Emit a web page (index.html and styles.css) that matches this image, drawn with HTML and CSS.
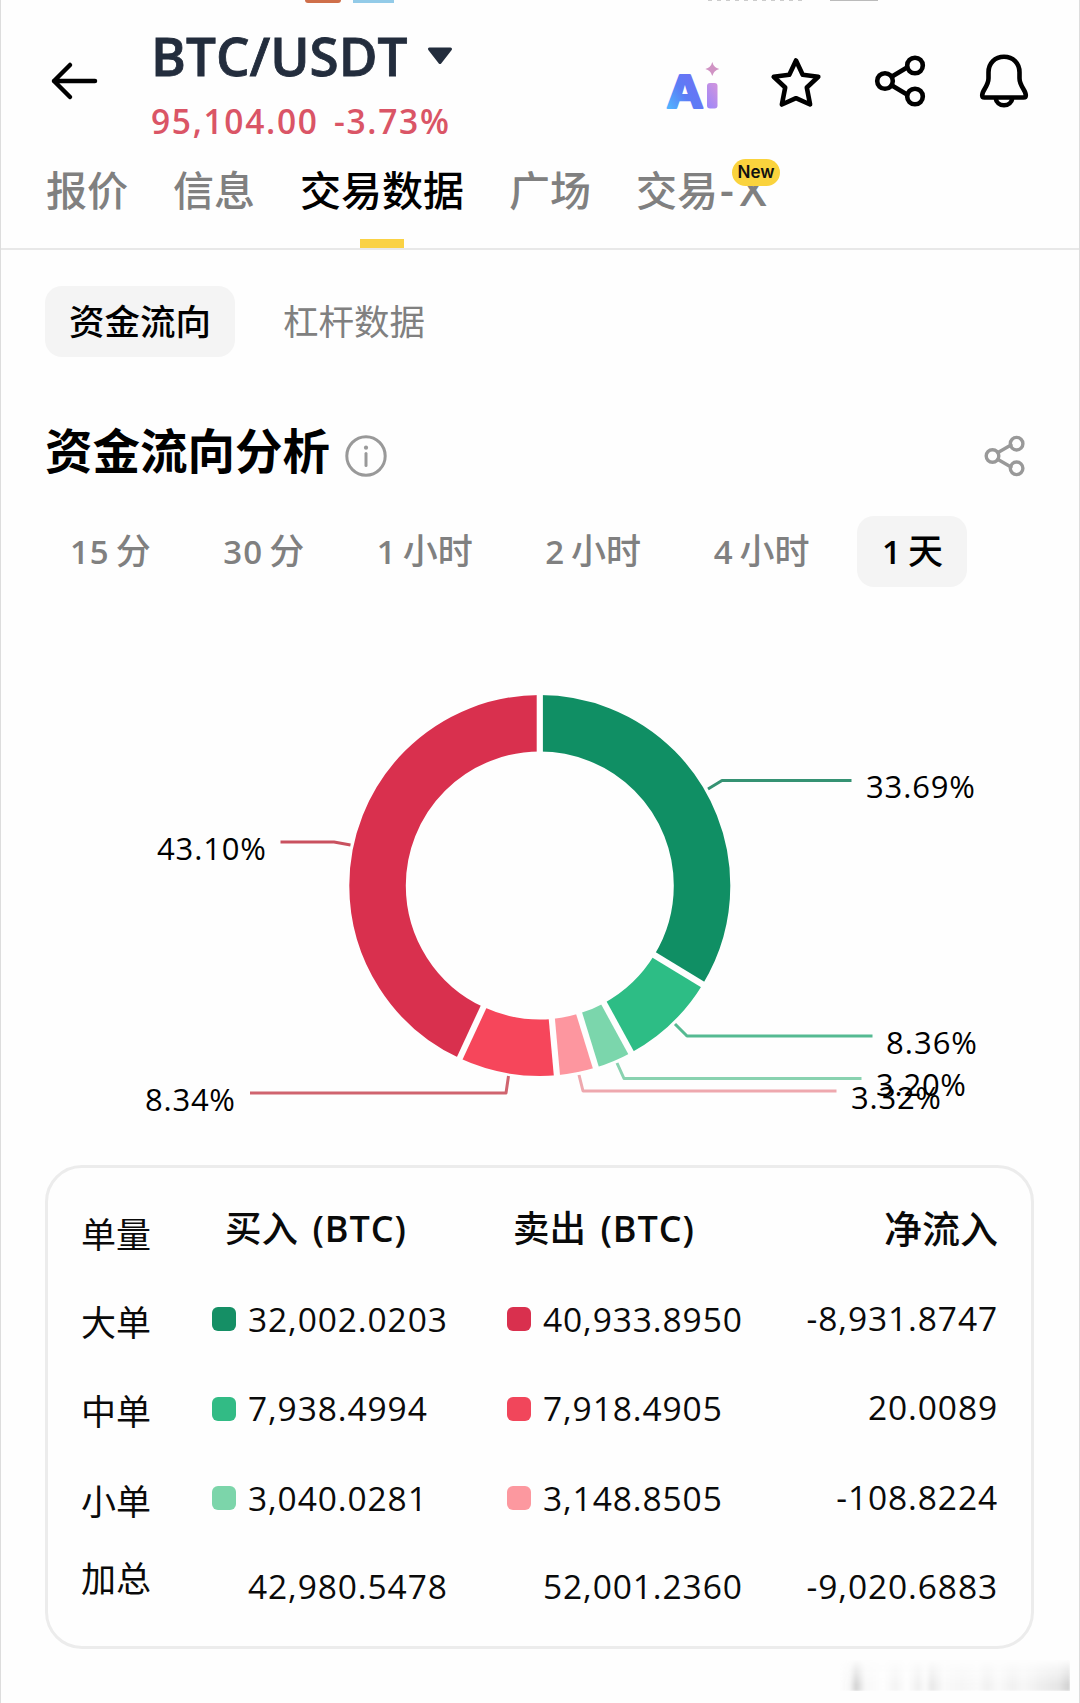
FILE: index.html
```html
<!DOCTYPE html>
<html lang="zh-CN">
<head>
    <meta charset="UTF-8">
    <title>BTC/USDT</title>
    <link rel="stylesheet" href="styles.css">
</head>
<body>
<div class="page">
    <div class="status">
        <span class="chip orange"></span>
        <span class="chip blue"></span>
        <span class="net"></span>
        <span class="battery"></span>
    </div>
    <div class="header">
        <svg class="back" width="48" height="40" viewBox="0 0 48 40"><path d="M44 20H3M19 4L3 20l16 16"/></svg>
        <div class="pair">
            <div class="name"><span>BTC/USDT</span><svg width="26" height="18" viewBox="0 0 26 18"><path d="M2.500 2h21L13 15.500z"/></svg></div>
            <div class="price"><span class="last">95,104.00</span><span class="change">-3.73%</span></div>
        </div>
        <div class="icons">
            <svg class="ai" width="56" height="54" viewBox="0 0 56 54">
                <defs>
                    <linearGradient id="aiA" x1="0" y1="1" x2="1" y2="0">
                        <stop offset="0.1" stop-color="#4fb8ff"/>
                        <stop offset="0.45" stop-color="#5b7df5"/>
                        <stop offset="1" stop-color="#7a68f5"/>
                    </linearGradient>
                    <linearGradient id="aiI" x1="0" y1="1" x2="0.6" y2="0">
                        <stop offset="0" stop-color="#9a86fb"/>
                        <stop offset="1" stop-color="#cb93e0"/>
                    </linearGradient>
                </defs>
                <text x="1.500" y="45.500" textLength="37" lengthAdjust="spacingAndGlyphs" fill="url(#aiA)" stroke="url(#aiA)">A</text>
                <rect x="42" y="21" width="10.500" height="25.500" rx="3" fill="url(#aiI)"/>
                <path d="M47.300 0q1.400 5.600 7 7q-5.600 1.400-7 7q-1.400-5.600-7-7q5.600-1.400 7-7z" fill="#d093c4"/>
            </svg>
            <svg class="star" width="50" height="52" viewBox="0 0 50 52"><path d="M25 3.500l6.700 14.200 15.600 2-11.500 10.800 3.300 17L25 41.200l-14.100 6.300 3.300-17L2.700 19.700l15.600-2z"/></svg>
            <svg class="share" width="50" height="52" viewBox="0 0 50 52"><path d="M17 21.500l15-9M17 30.500l15 9"/><circle cx="10" cy="26" r="7.800"/><circle cx="40" cy="10.500" r="7.800"/><circle cx="40" cy="41.500" r="7.800"/></svg>
            <svg class="bell" width="50" height="56" viewBox="0 0 50 56"><path d="M25 3.800c-9 0-15.500 6.500-15.500 15.500v6c0 8-6.300 11.500-6.300 17 0 1.400.9 2.200 2.200 2.200h39.200c1.300 0 2.200-.8 2.200-2.200 0-5.500-6.300-9-6.300-17v-6C40.500 10.300 34 3.800 25 3.800zM16.500 45a8.600 8.600 0 0 0 17 0"/></svg>
        </div>
    </div>
    <div class="tabs">
        <a>报价</a>
        <a>信息</a>
        <a class="current">交易数据</a>
        <a>广场</a>
        <a>交易<b>-X</b><span class="new">New</span></a>
    </div>
    <div class="subtabs">
        <a class="current">资金流向</a>
        <a>杠杆数据</a>
    </div>
    <div class="title">
        <h2>资金流向分析</h2>
        <svg class="info" width="42" height="42" viewBox="0 0 42 42"><circle cx="21" cy="21" r="19.200"/><path d="M21 18.500v12"/><circle class="dot" cx="21" cy="12.700" r="2.100"/></svg>
        <svg class="share" width="42" height="44" viewBox="0 0 42 44"><path d="M14 18.500l13-7.500M14 25.500l13 7.500"/><circle cx="8.500" cy="22" r="6.300"/><circle cx="32.600" cy="9.700" r="6.300"/><circle cx="32.600" cy="34.300" r="6.300"/></svg>
    </div>
    <div class="periods">
        <a><b>15</b> 分</a>
        <a><b>30</b> 分</a>
        <a><b>1</b> 小时</a>
        <a><b>2</b> 小时</a>
        <a><b>4</b> 小时</a>
        <a class="current"><b>1</b> 天</a>
    </div>
    <!-- 环形图 -->
    <svg class="chart" width="1080" height="480" viewBox="0 660 1080 480">
        <g class="ring" transform="translate(539.800 885.500) rotate(-90)">
            <circle r="162.250" pathLength="100" stroke="#108f64" stroke-dasharray="33.690 100"/>
            <circle r="162.250" pathLength="100" stroke="#2dbd85" stroke-dasharray="8.360 100" stroke-dashoffset="-33.690"/>
            <circle r="162.250" pathLength="100" stroke="#7bd6ac" stroke-dasharray="3.200 100" stroke-dashoffset="-42.050"/>
            <circle r="162.250" pathLength="100" stroke="#fd969f" stroke-dasharray="3.320 100" stroke-dashoffset="-45.250"/>
            <circle r="162.250" pathLength="100" stroke="#f6465b" stroke-dasharray="8.340 100" stroke-dashoffset="-48.570"/>
            <circle r="162.250" pathLength="100" stroke="#d9304e" stroke-dasharray="43.100 100" stroke-dashoffset="-56.910"/>
        </g>
        <g class="gaps" transform="translate(539.800 885.500)">
            <path d="M0-130V-194"/>
            <path d="M0-130V-194" transform="rotate(121.280)"/>
            <path d="M0-130V-194" transform="rotate(151.380)"/>
            <path d="M0-130V-194" transform="rotate(162.900)"/>
            <path d="M0-130V-194" transform="rotate(174.850)"/>
            <path d="M0-130V-194" transform="rotate(204.870)"/>
        </g>
        <g class="leads">
            <path stroke="#359273" d="M708 789L722 780.500H851.500"/>
            <path stroke="#55ba92" d="M675 1024L687 1036H872.500"/>
            <path stroke="#89d2b0" d="M617 1063L624 1078.500H861.500"/>
            <path stroke="#eea8ae" d="M579 1075L583 1091H836.500"/>
            <path stroke="#d0646f" d="M508.500 1076L506 1093H250"/>
            <path stroke="#c9515f" d="M350.500 845L334 842H280.500"/>
        </g>
        <g class="labels">
            <text x="866" y="798" textLength="109">33.69%</text>
            <text x="886" y="1054" textLength="91">8.36%</text>
            <text x="876" y="1096" textLength="90">3.20%</text>
            <text x="851" y="1109" textLength="90">3.32%</text>
            <text x="145" y="1110.500" textLength="90">8.34%</text>
            <text x="157" y="859.500" textLength="109">43.10%</text>
        </g>
    </svg>
    <div class="card">
        <div class="row head">
            <span class="label">单量</span>
            <span class="buy">买入 <b>(BTC)</b></span>
            <span class="sell">卖出 <b>(BTC)</b></span>
            <span class="flow">净流入</span>
        </div>
        <div class="row">
            <span class="label">大单</span>
            <span class="buy"><i class="b1"></i>32,002.0203</span>
            <span class="sell"><i class="s1"></i>40,933.8950</span>
            <span class="flow">-8,931.8747</span>
        </div>
        <div class="row">
            <span class="label">中单</span>
            <span class="buy"><i class="b2"></i>7,938.4994</span>
            <span class="sell"><i class="s2"></i>7,918.4905</span>
            <span class="flow">20.0089</span>
        </div>
        <div class="row">
            <span class="label">小单</span>
            <span class="buy"><i class="b3"></i>3,040.0281</span>
            <span class="sell"><i class="s3"></i>3,148.8505</span>
            <span class="flow">-108.8224</span>
        </div>
        <div class="row total">
            <span class="label">加总</span>
            <span class="buy"><i></i>42,980.5478</span>
            <span class="sell"><i></i>52,001.2360</span>
            <span class="flow">-9,020.6883</span>
        </div>
    </div>
    <div class="mark"></div>
</div>
</body>
</html>
```
FILE: styles.css
```css
* {
    padding: 0;
    margin: 0;
    box-sizing: border-box;
}
body {
    background: #fefefe;
    color: #0a0a0a;
    font-family: "Open Sans", "Noto Sans CJK SC", sans-serif;
}
.page {
    width: 1080px;
    height: 1703px;
    overflow: hidden;
    border-left: 1px solid #ddd;
    border-right: 1px solid #ddd;
}
svg {
    display: block;
    flex: none;
    fill: none;
    overflow: visible;
}
b {
    font-weight: 600;
}
/* 状态栏 */
.status {
    display: flex;
    height: 3px;
    padding-left: 304px;
}
.chip {
    width: 36px;
    height: 3px;
    background: #cf6f4a;
    border-radius: 0 0 10px 10px;
}
.chip.blue {
    width: 41px;
    margin-left: 12px;
    background: #93cbe8;
    border-radius: 0;
}
.net {
    width: 98px;
    height: 1px;
    margin-left: 314px;
    background: repeating-linear-gradient(90deg, #ccc 0 4px, #fefefe 4px 9px);
}
.battery {
    width: 48px;
    height: 1px;
    margin-left: 24px;
    background: #bbb;
}
/* 头部 */
.header {
    display: flex;
    height: 147px;
    padding-left: 50px;
}
.back {
    margin-top: 58px;
    stroke: #000;
    stroke-width: 4.5;
    stroke-linecap: round;
    stroke-linejoin: round;
}
.pair {
    width: 320px;
    margin-left: 52px;
    padding-top: 18px;
}
.name {
    display: flex;
    align-items: center;
    height: 70px;
    font-size: 53px;
    line-height: 70px;
    font-weight: 600;
    color: #232d3d;
}
.name span {
    width: 276px;
    -webkit-text-stroke: 0.800px #232d3d;
}
.name svg {
    fill: #232d3d;
    stroke: #232d3d;
    stroke-width: 3;
    stroke-linejoin: round;
}
.price {
    display: flex;
    height: 46px;
    margin-top: 7px;
    line-height: 46px;
    font-size: 33.500px;
    font-weight: 600;
    letter-spacing: 1.700px;
    color: #da5566;
}
.last {
    width: 183px;
}
.icons {
    display: flex;
    margin-left: 194px;
}
.icons .star, .icons .share, .icons .bell {
    stroke: #000;
    stroke-width: 4.6;
    stroke-linejoin: round;
    stroke-linecap: round;
}
.ai {
    margin-top: 59px;
}
.ai text {
    font-family: Inter, sans-serif;
    font-size: 45px;
    font-weight: 700;
    stroke-width: 2.200;
    stroke-linejoin: round;
}
.icons .star {
    margin: 54px 0 0 50px;
}
.icons .share {
    margin: 52px 0 0 54px;
}
.icons .bell {
    margin: 50px 0 0 54px;
}
/* 导航 */
.tabs {
    display: flex;
    gap: 45px;
    height: 100px;
    padding: 7px 0 0 45px;
    border-bottom: 2px solid #e8e8e8;
    font-size: 41px;
    line-height: 66px;
    color: #808080;
    font-weight: 500;
}
.tabs a {
    position: relative;
    white-space: nowrap;
}
.tabs b {
    margin-left: 2px;
    font-size: 43px;
    letter-spacing: 6px;
    line-height: 1;
}
.tabs .current {
    color: #000;
    font-weight: 500;
}
.tabs .current::after {
    content: "";
    position: absolute;
    left: 60px;
    bottom: 0;
    width: 44px;
    height: 9px;
    background: #fad244;
}
.new {
    position: absolute;
    left: 96px;
    top: 2px;
    width: 48px;
    height: 27px;
    border-radius: 14px;
    background: #fad33d;
    color: #111;
    font: 600 17px/27px Inter, sans-serif;
    text-align: center;
}
.subtabs {
    display: flex;
    gap: 24px;
    padding: 36px 0 0 44px;
    font-size: 35.500px;
    line-height: 71px;
    color: #808080;
}
.subtabs a, .periods a {
    height: 71px;
    padding: 0 24px;
    border-radius: 17px;
    white-space: nowrap;
}
.subtabs .current, .periods .current {
    background: #f4f4f4;
    color: #000;
    font-weight: 500;
}
.title {
    display: flex;
    height: 88px;
    margin-top: 50px;
    padding-left: 44px;
}
.title h2 {
    width: 300px;
    font-size: 47.500px;
    line-height: 88px;
    color: #000;
    font-weight: 700;
}
.title .info, .title .share {
    stroke: #999;
    stroke-width: 3;
    stroke-linecap: round;
}
.title .info {
    margin-top: 28px;
}
.info .dot {
    fill: #999;
    stroke: none;
}
.title .share {
    margin: 27px 0 0 597px;
    stroke-width: 3.400;
}
/* 时间 */
.periods {
    display: flex;
    gap: 22.500px;
    margin-top: 21px;
    padding-left: 44px;
    height: 71px;
    font-size: 35px;
    line-height: 70px;
    color: #808080;
    font-weight: 500;
}
.periods a {
    padding: 0 25px;
    word-spacing: -3px;
}
.periods b {
    font-size: 33px;
    letter-spacing: 1px;
}
.periods .current {
    padding: 0 24px 0 25px;
}
.chart {
    margin: 73px 0 0 -1px;
}
.ring {
    stroke-width: 56.500;
}
.gaps {
    stroke: #fefefe;
    stroke-width: 6.200;
}
.leads {
    stroke-width: 3;
    stroke-linejoin: round;
}
.labels {
    fill: #000;
    font-size: 31px;
}
/* 表格 */
.card {
    width: 989px;
    height: 484px;
    margin: 25px 0 0 44px;
    padding: 17px 33px 0 33px;
    border: 3px solid #ececec;
    border-radius: 37px;
}
.row {
    display: grid;
    grid-template-columns: 131px 295px 295px 1fr;
    height: 89.500px;
    line-height: 89.500px;
    font-size: 33.500px;
    letter-spacing: 0.900px;
    white-space: nowrap;
}
.label {
    padding-top: 3px;
    font-size: 35px;
    letter-spacing: 0;
}
.total .label {
    padding: 0;
    margin-top: -9px;
}
.buy, .sell {
    display: flex;
    align-items: center;
    margin-top: -3px;
}
.row i {
    width: 24px;
    height: 24px;
    margin-right: 12px;
    border-radius: 6px;
}
.head {
    font-size: 36.500px;
    font-weight: 500;
    letter-spacing: 0;
}
.head .label {
    padding-top: 5px;
    font-weight: 400;
}
.head .buy, .head .sell {
    display: block;
    margin-top: -1px;
}
.head b {
    margin-left: 5px;
    font-size: 36px;
    letter-spacing: 0.900px;
}
.head .buy {
    padding-left: 13px;
}
.head .sell {
    padding-left: 6px;
}
.flow {
    margin-top: -1px;
    text-align: right;
}
.head .flow {
    font-size: 38px;
}
.b1 { background: #158f65; }
.b2 { background: #32bb85; }
.b3 { background: #7cd5aa; }
.s1 { background: #d9304e; }
.s2 { background: #f1465b; }
.s3 { background: #fc989f; }
/* 右下角水印 */
.mark {
    width: 230px;
    height: 32px;
    margin: 10px 0 0 839px;
    background: linear-gradient(90deg, transparent 0, #f8f8f8 4%, #d4d4d4 7%, #f8f8f8 11%, #fefefe 19%, #f4f4f4 24%, #fefefe 29%, #f0f0f0 34%, #fbfbfb 37%, #e9e9e9 40%, #fafafa 45%, #f6f6f6 53%, #fafafa 60%, #f1f1f1 64%, #fafafa 69%, #f1f1f1 75%, #f7f7f7 80%, #eee 87%, #e6e6e6 95%, #d0d0d0 100%);
    -webkit-mask-image: linear-gradient(transparent, #000 80%);
    mask-image: linear-gradient(transparent, #000 80%);
    filter: blur(1px);
}
```
